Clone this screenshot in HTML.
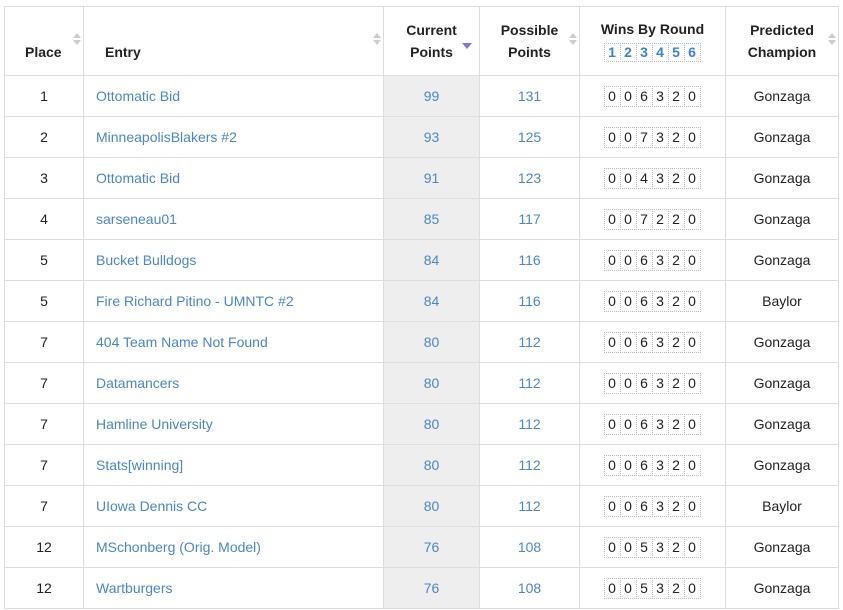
<!DOCTYPE html>
<html><head><meta charset="utf-8"><style>
body{margin:0;background:#fff;font-family:"Liberation Sans",sans-serif;color:#222;}
table{position:absolute;left:4px;top:6px;border-collapse:collapse;table-layout:fixed;width:835px;font-size:14px;}
td,th{border:1px solid #ddd;padding:0;text-align:center;}
th{height:56px;font-weight:bold;font-size:14px;color:#222;position:relative;vertical-align:bottom;padding-bottom:12px;line-height:22px;}
td{height:40px;}
td.e{text-align:left;padding-left:12px;}
a{color:#4a86c8;text-decoration:none;}
td.c{background:#eee;}
.s{position:absolute;right:6px;top:26px;width:0;}
.s:before{content:"";position:absolute;border:4px solid transparent;border-bottom:5px solid #ccc;border-top:0;left:-4px;top:0;}
.s:after{content:"";position:absolute;border:4px solid transparent;border-top:5px solid #ccc;border-bottom:0;left:-4px;top:7px;}
.d{position:absolute;right:7px;top:36px;border:5px solid transparent;border-top:6px solid #7b7bd6;border-bottom:0;}
.w{display:inline-flex;}
.w span{display:inline-block;width:15px;height:19px;line-height:19px;border:1px dotted #bbb;margin-left:-1px;font-size:14px;}
.h span{color:#3d82d0;font-weight:bold;height:17px;line-height:17px;}
</style></head><body>
<table>
<colgroup><col style="width:79px"><col style="width:300px"><col style="width:96px"><col style="width:100px"><col style="width:146px"><col style="width:113px"></colgroup>
<tr><th style="text-align:left;padding-left:20px">Place<i class="s"></i></th>
<th style="text-align:left;padding-left:21px">Entry<i class="s"></i></th>
<th>Current<br>Points<i class="d"></i></th>
<th>Possible<br>Points<i class="s"></i></th>
<th style="padding-bottom:12px"><div style="line-height:18px;margin-bottom:3px">Wins By Round</div><div class="w h"><span>1</span><span>2</span><span>3</span><span>4</span><span>5</span><span>6</span></div></th>
<th>Predicted<br>Champion<i class="s"></i></th></tr>
<tr><td>1</td><td class="e"><a>Ottomatic Bid</a></td><td class="c"><a>99</a></td><td><a>131</a></td><td><div class="w"><span>0</span><span>0</span><span>6</span><span>3</span><span>2</span><span>0</span></div></td><td>Gonzaga</td></tr>
<tr><td>2</td><td class="e"><a>MinneapolisBlakers #2</a></td><td class="c"><a>93</a></td><td><a>125</a></td><td><div class="w"><span>0</span><span>0</span><span>7</span><span>3</span><span>2</span><span>0</span></div></td><td>Gonzaga</td></tr>
<tr><td>3</td><td class="e"><a>Ottomatic Bid</a></td><td class="c"><a>91</a></td><td><a>123</a></td><td><div class="w"><span>0</span><span>0</span><span>4</span><span>3</span><span>2</span><span>0</span></div></td><td>Gonzaga</td></tr>
<tr><td>4</td><td class="e"><a>sarseneau01</a></td><td class="c"><a>85</a></td><td><a>117</a></td><td><div class="w"><span>0</span><span>0</span><span>7</span><span>2</span><span>2</span><span>0</span></div></td><td>Gonzaga</td></tr>
<tr><td>5</td><td class="e"><a>Bucket Bulldogs</a></td><td class="c"><a>84</a></td><td><a>116</a></td><td><div class="w"><span>0</span><span>0</span><span>6</span><span>3</span><span>2</span><span>0</span></div></td><td>Gonzaga</td></tr>
<tr><td>5</td><td class="e"><a>Fire Richard Pitino - UMNTC #2</a></td><td class="c"><a>84</a></td><td><a>116</a></td><td><div class="w"><span>0</span><span>0</span><span>6</span><span>3</span><span>2</span><span>0</span></div></td><td>Baylor</td></tr>
<tr><td>7</td><td class="e"><a>404 Team Name Not Found</a></td><td class="c"><a>80</a></td><td><a>112</a></td><td><div class="w"><span>0</span><span>0</span><span>6</span><span>3</span><span>2</span><span>0</span></div></td><td>Gonzaga</td></tr>
<tr><td>7</td><td class="e"><a>Datamancers</a></td><td class="c"><a>80</a></td><td><a>112</a></td><td><div class="w"><span>0</span><span>0</span><span>6</span><span>3</span><span>2</span><span>0</span></div></td><td>Gonzaga</td></tr>
<tr><td>7</td><td class="e"><a>Hamline University</a></td><td class="c"><a>80</a></td><td><a>112</a></td><td><div class="w"><span>0</span><span>0</span><span>6</span><span>3</span><span>2</span><span>0</span></div></td><td>Gonzaga</td></tr>
<tr><td>7</td><td class="e"><a>Stats[winning]</a></td><td class="c"><a>80</a></td><td><a>112</a></td><td><div class="w"><span>0</span><span>0</span><span>6</span><span>3</span><span>2</span><span>0</span></div></td><td>Gonzaga</td></tr>
<tr><td>7</td><td class="e"><a>UIowa Dennis CC</a></td><td class="c"><a>80</a></td><td><a>112</a></td><td><div class="w"><span>0</span><span>0</span><span>6</span><span>3</span><span>2</span><span>0</span></div></td><td>Baylor</td></tr>
<tr><td>12</td><td class="e"><a>MSchonberg (Orig. Model)</a></td><td class="c"><a>76</a></td><td><a>108</a></td><td><div class="w"><span>0</span><span>0</span><span>5</span><span>3</span><span>2</span><span>0</span></div></td><td>Gonzaga</td></tr>
<tr><td>12</td><td class="e"><a>Wartburgers</a></td><td class="c"><a>76</a></td><td><a>108</a></td><td><div class="w"><span>0</span><span>0</span><span>5</span><span>3</span><span>2</span><span>0</span></div></td><td>Gonzaga</td></tr>
</table>
</body></html>
